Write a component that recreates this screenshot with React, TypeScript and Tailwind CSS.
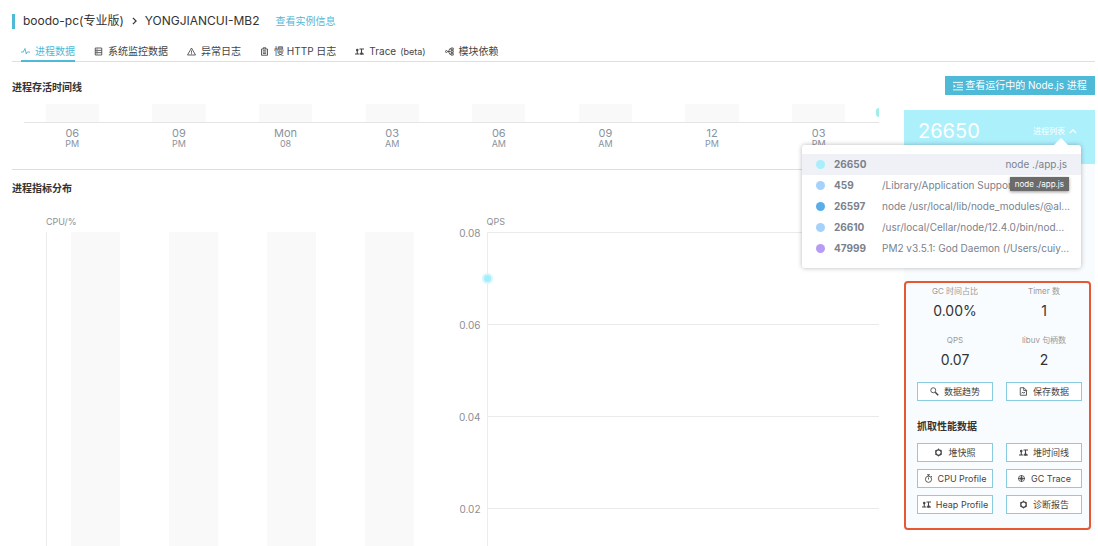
import type { ReactNode } from "react"

type Glyph = { className?: string }

function Svg({ className = "size-[9px]", children }: Glyph & { children: ReactNode }) {
	return (
		<svg
			viewBox="0 0 18 18"
			className={`shrink-0 ${className}`}
			fill="none"
			stroke="currentColor"
			strokeWidth="1.7"
			aria-hidden="true"
		>
			{children}
		</svg>
	)
}

const Pulse = () => (
	<Svg>
		<path d="M0 10h4.500L8 3l2.500 11 2-4H18" strokeWidth="1.900" />
	</Svg>
)

const Storage = () => (
	<Svg>
		<path d="M2.500 2h13v14h-13zM2.500 6.700h13M2.500 11.300h13M5 4.300h2M5 9h2M5 13.700h2" />
	</Svg>
)

const Warning = () => (
	<Svg>
		<path d="M9 2 17 16H1zM9 7v4.500M9 12.500v2" />
	</Svg>
)

const Clipboard = () => (
	<Svg>
		<path d="M3 4h12v12.500H3zM6.500 4V1.500h5V4M5.500 7.500h7M5.500 10.300h7M5.500 13.200h7" />
	</Svg>
)

const Merge = () => (
	<Svg>
		<path d="M4.500 5v9M13 4v10" strokeWidth="2.200" />
		<path d="M0 14h8.500M9.500 14H18M9 4h9" strokeWidth="2.200" />
		<circle cx="4.500" cy="6" r="2.500" fill="currentColor" stroke="none" />
		<circle cx="13" cy="13" r="2.500" fill="currentColor" stroke="none" />
	</Svg>
)

const Tree = () => (
	<Svg>
		<path d="M5 9h6M12 3.500H9.500L7 9l2.500 5.500H12" />
		<circle cx="2.800" cy="9" r="2" />
		<path d="M12 2h4.500v3.500H12zM12 7.300h4.500v3.500H12zM12 12.700h4.500v3.500H12z" />
	</Svg>
)

const Indent = () => (
	<Svg className="size-[10px]">
		<path d="M0 2.500h18M7 7h11M7 11.500h11M0 16h18" />
		<path d="m1 6.500 4 2.800-4 2.800z" fill="currentColor" stroke="none" />
	</Svg>
)

const Search = () => (
	<Svg>
		<circle cx="6.500" cy="6.500" r="5" />
		<path d="m10.500 10.500 6 6" strokeWidth="3" />
	</Svg>
)

const Save = () => (
	<Svg>
		<path d="M2.500 1.500h7.500l5 5v10H2.500zM9.500 1.500V7H15M5.500 12.500l2-2.500 2 2.500 3-3" />
	</Svg>
)

const Ring = () => (
	<Svg>
		<circle cx="9" cy="9" r="5.500" strokeWidth="2.500" />
		<path d="M9 1v3M9 14v3M2 5l2.600 1.500M13.400 11.500 16 13M2 13l2.600-1.500M13.400 6.500 16 5" />
	</Svg>
)

const Stopwatch = () => (
	<Svg>
		<circle cx="9" cy="10.500" r="6.200" />
		<path d="M6 1.500h6M9 1.500v3M9 7v4M14 4l2 2" />
	</Svg>
)

const Target = () => (
	<Svg>
		<circle cx="9" cy="9" r="6" />
		<path d="M9 2v4M9 12v4M2 9h4M12 9h4" />
		<circle cx="9" cy="9" r="3" fill="currentColor" stroke="none" />
	</Svg>
)

const tabs = [
	{ icon: <Pulse />, label: "进程数据", active: true },
	{ icon: <Storage />, label: "系统监控数据" },
	{ icon: <Warning />, label: "异常日志" },
	{ icon: <Clipboard />, label: "慢 HTTP 日志" },
	{ icon: <Merge />, label: "Trace", note: "(beta)" },
	{ icon: <Tree />, label: "模块依赖" },
]

const ticks = [
	["06", "PM"],
	["09", "PM"],
	["Mon", "08"],
	["03", "AM"],
	["06", "AM"],
	["09", "AM"],
	["12", "PM"],
	["03", "PM"],
]

const processes = [
	{ pid: "26650", dot: "bg-[#a9effb]", cmd: "node ./app.js" },
	{ pid: "459", dot: "bg-[#a3d3fb]", cmd: "/Library/Application Support/..." },
	{ pid: "26597", dot: "bg-[#5aade8]", cmd: "node /usr/local/lib/node_modules/@al..." },
	{ pid: "26610", dot: "bg-[#a3d3fb]", cmd: "/usr/local/Cellar/node/12.4.0/bin/nod..." },
	{ pid: "47999", dot: "bg-[#b79cf3]", cmd: "PM2 v3.5.1: God Daemon (/Users/cuiy..." },
]

const stats = [
	["GC 时间占比", "0.00%"],
	["Timer 数", "1"],
	["QPS", "0.07"],
	["libuv 句柄数", "2"],
]

function Header() {
	return (
		<header>
			<div className="flex h-[42px] items-center">
				<span className="h-[15px] w-[3px] bg-[#4fb9d8]" />
				<h1 className="ml-2 flex items-center gap-2 text-[12px] leading-4 text-[#333]">
					boodo-pc(专业版)
					<svg viewBox="0 0 6 10" className="h-[8px] w-[5px]" fill="none" stroke="currentColor" strokeWidth="1.500" aria-hidden="true">
						<path d="m1 1 4 4-4 4" />
					</svg>
					YONGJIANCUI-MB2
				</h1>
				<a href="#instance" className="ml-4 text-[10px] leading-4 text-[#4fb9d8]">
					查看实例信息
				</a>
			</div>
			<nav className="flex h-5 gap-[19px] border-b border-[#dcdee0] pl-[9px]">
				{tabs.map((tab) => (
					<a
						key={tab.label}
						href="#tab"
						className={
							tab.active
								? "flex h-5 items-center gap-[5px] border-b-2 border-[#4fb9d8] text-[10px] text-[#4fb9d8]"
								: "flex h-5 items-center gap-[5px] border-b-2 border-transparent text-[10px] text-[#444]"
						}
					>
						{tab.icon}
						<span>
							{tab.label}
							{tab.note && <span className="ml-1 text-[9px]">{tab.note}</span>}
						</span>
					</a>
				))}
			</nav>
		</header>
	)
}

function Timeline() {
	return (
		<section className="border-b border-[#dcdddf] pb-5">
			<h2 className="text-[10px] leading-4 font-bold text-[#333]">进程存活时间线</h2>
			<div className="relative mt-[9px]">
				<div className="mx-[7px] grid grid-cols-8 justify-items-center">
					{ticks.map((tick, i) => (
						<span key={i} className="h-[18px] w-1/2 bg-[#f9f9f9]" />
					))}
				</div>
				<span className="absolute right-0 bottom-1.5 h-[9px] w-[3px] rounded-l-full bg-[#a0eee9]" />
				<div className="ml-3 h-px bg-[#e4e5e7]" />
			</div>
			<div className="mx-[7px] mt-1 grid grid-cols-8 text-center text-[#8a93a0]">
				{ticks.map(([top, bottom], i) => (
					<div key={i}>
						<div className="text-[11px] leading-3">{top}</div>
						<div className="text-[9px] leading-[10px]">{bottom}</div>
					</div>
				))}
			</div>
		</section>
	)
}

function CpuChart() {
	return (
		<div className="flex-1">
			<h3 className="text-[9px] leading-5 text-[#8c8f94]">CPU/%</h3>
			<div className="grid h-[460px] grid-cols-4 justify-items-center border-l border-[#ececee]">
				{[0, 1, 2, 3].map((band) => (
					<span key={band} className="h-full w-1/2 bg-[#f9f9f9]" />
				))}
			</div>
		</div>
	)
}

function QpsChart() {
	return (
		<div className="flex-1">
			<h3 className="text-[9px] leading-5 text-[#8c8f94]">QPS</h3>
			<div className="relative border-l border-[#ececee]">
				{["0.08", "0.06", "0.04", "0.02"].map((value) => (
					<div key={value} className="relative h-[92px] border-t border-[#e9eaeb]">
						<span className="absolute top-0 right-full mr-[7px] -translate-y-1/2 text-[10px] leading-3 text-[#8a8f96]">
							{value}
						</span>
					</div>
				))}
				<span className="absolute top-[41px] -left-1.5 size-[11px] rounded-full border-2 border-[#d5f7fd] bg-[#a3eefa]" />
			</div>
		</div>
	)
}

function ProcessMenu() {
	return (
		<div className="absolute top-[35px] right-[14px] z-10 w-[279px] rounded-[3px] bg-white py-[9px] text-[10px] text-[#7a828e] shadow-[0_0_5px_rgba(0,0,0,0.28)]">
			<svg viewBox="0 0 14 7" className="absolute right-[13px] bottom-full h-[7px] w-[14px]" aria-hidden="true">
				<path d="M0 7 7 0l7 7z" fill="#fff" />
			</svg>
			<ul>
				{processes.map((process, i) => (
					<li
						key={process.pid}
						className={i === 0 ? "flex h-[21px] items-center bg-[#eff1f6] px-[14px]" : "flex h-[21px] items-center px-[14px]"}
					>
						<span className={`size-[9px] shrink-0 rounded-full ${process.dot}`} />
						<b className="ml-[9px] w-12 shrink-0 font-bold">{process.pid}</b>
						<span className={i === 0 ? "ml-auto" : "whitespace-nowrap"}>{process.cmd}</span>
					</li>
				))}
			</ul>
			<div role="tooltip" className="absolute top-8 right-3 bg-[#6b6b6b] px-[5px] text-[8px] leading-[14px] text-white shadow-[0_1px_3px_rgba(0,0,0,0.4)]">
				node ./app.js
			</div>
		</div>
	)
}

function Action({ icon, children }: { icon: ReactNode; children: ReactNode }) {
	return (
		<button
			type="button"
			className="flex h-[19px] items-center justify-center gap-[5px] border border-[#8accdf] bg-white text-[9px] whitespace-nowrap text-[#444]"
		>
			{icon}
			{children}
		</button>
	)
}

function ProcessPanel() {
	return (
		<aside className="w-[191px] shrink-0">
			<div className="flex justify-end">
				<button type="button" className="flex h-[19px] w-[150px] items-center justify-center gap-0.5 bg-[#4fb9d8] text-[10px] whitespace-nowrap text-white">
					<Indent />
					查看运行中的 Node.js 进程
				</button>
			</div>
			<div className="relative mt-[15px] flex h-[54px] items-start justify-between bg-[#acf0fc] px-[14px] text-white">
				<strong className="text-[20px] leading-[43px] font-normal">26650</strong>
				<button type="button" className="mr-1 flex items-center gap-1 text-[8px] leading-[43px]">
					进程列表
					<svg viewBox="0 0 10 6" className="h-[5px] w-[8px]" fill="none" stroke="currentColor" strokeWidth="1.500" aria-hidden="true">
						<path d="m1 5 4-4 4 4" />
					</svg>
				</button>
				<ProcessMenu />
			</div>
			<div className="bg-[#f9fcfe] pt-[117px]">
				<div className="relative px-[13px] pb-4">
					<div className="absolute inset-y-0 right-1 left-0 rounded-[4px] border-2 border-[#e65733]" />
					<dl className="grid grid-cols-2 gap-x-[13px] text-center">
						{stats.map(([label, value]) => (
							<div key={label} className="h-[49px] pt-[3px]">
								<dt className="text-[8px] leading-[14px] text-[#999]">{label}</dt>
								<dd className="text-[14px] leading-[25px] text-[#333]">{value}</dd>
							</div>
						))}
					</dl>
					<div className="relative grid grid-cols-2 gap-x-[13px] pt-[3px]">
						<Action icon={<Search />}>数据趋势</Action>
						<Action icon={<Save />}>保存数据</Action>
					</div>
					<h2 className="pt-[17px] text-[10px] leading-4 font-bold text-[#333]">抓取性能数据</h2>
					<div className="relative mt-[9px] grid grid-cols-2 gap-x-[13px] gap-y-[7px]">
						<Action icon={<Ring />}>堆快照</Action>
						<Action icon={<Merge />}>堆时间线</Action>
						<Action icon={<Stopwatch />}>CPU Profile</Action>
						<Action icon={<Target />}>GC Trace</Action>
						<Action icon={<Merge />}>Heap Profile</Action>
						<Action icon={<Ring />}>诊断报告</Action>
					</div>
				</div>
			</div>
		</aside>
	)
}

export default function App() {
	return (
		<div className="h-screen overflow-hidden bg-white pr-[3px] pl-3 font-[Inter,'Noto_Sans_CJK_SC',sans-serif]">
			<Header />
			<div className="flex gap-[25px] pt-[14px]">
				<main className="min-w-0 flex-1 pt-[3px]">
					<Timeline />
					<section className="pt-[10px]">
						<h2 className="text-[10px] leading-4 font-bold text-[#333]">进程指标分布</h2>
						<div className="mt-4 flex gap-12 pl-[34px]">
							<CpuChart />
							<QpsChart />
						</div>
					</section>
				</main>
				<ProcessPanel />
			</div>
		</div>
	)
}
